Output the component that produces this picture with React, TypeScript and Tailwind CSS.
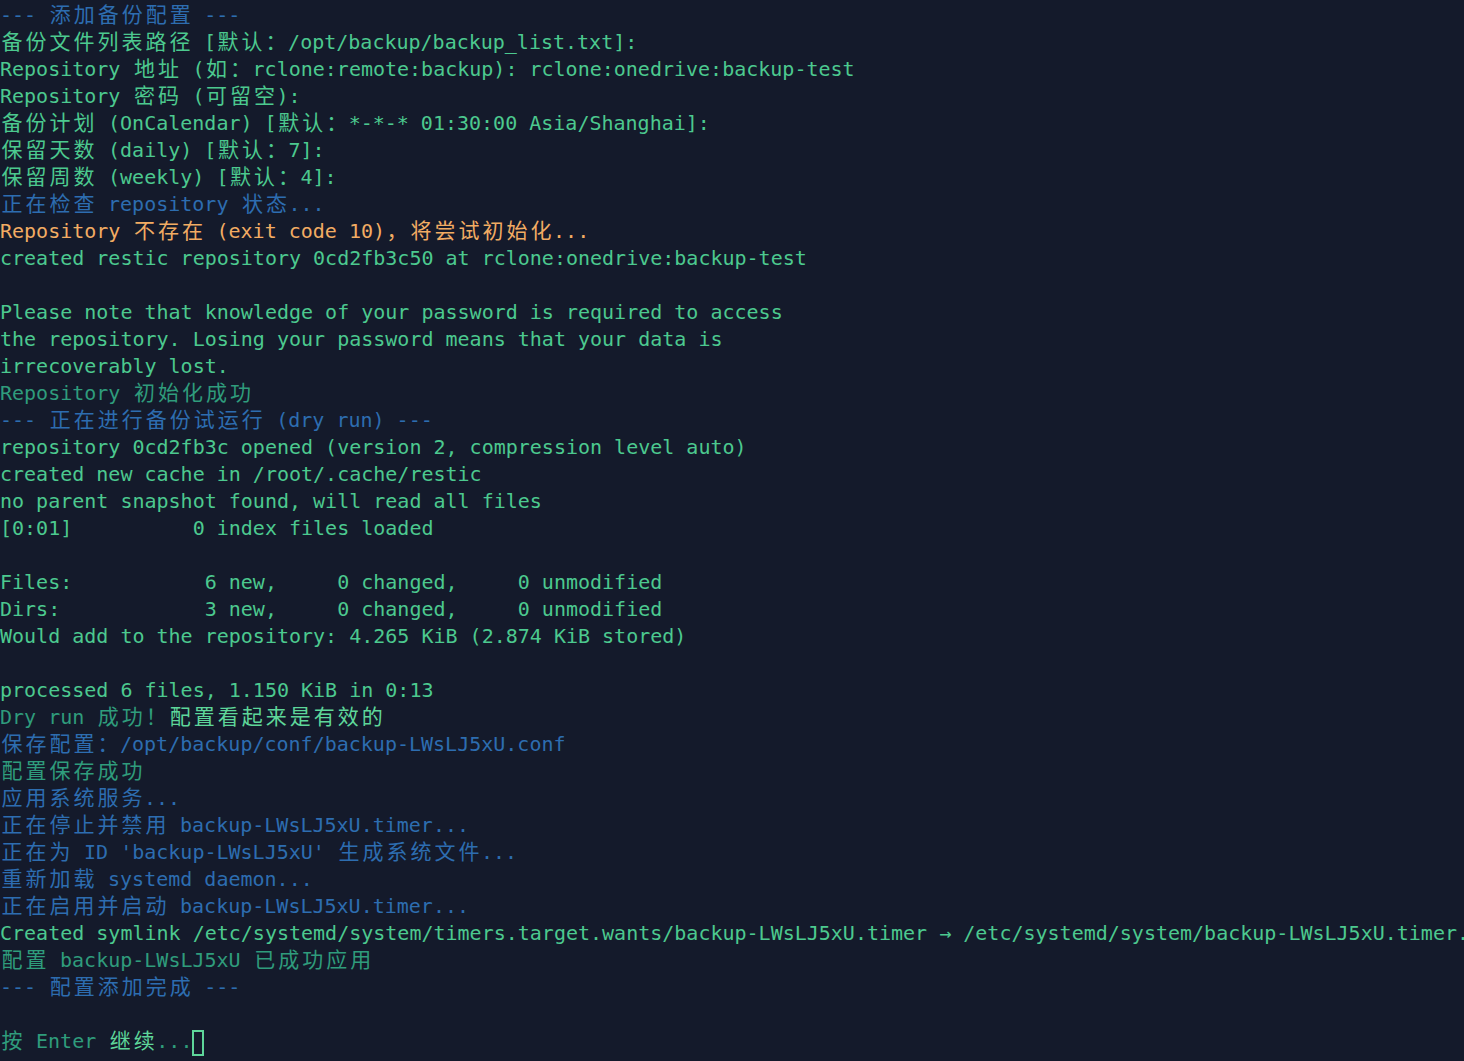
import type { ReactNode } from "react";

type Seg = [string, string];

const G = "text-[#4cc98f]";
const D = "text-[#2f9c7c]";
const B = "text-[#2d6db0]";
const O = "text-[#f2ac63]";
const E = "text-[#5ed69a]";

const lines: Seg[][] = [
  [[B, "--- 添加备份配置 ---"]],
  [[G, "备份文件列表路径 [默认：/opt/backup/backup_list.txt]:"]],
  [[G, "Repository 地址 (如：rclone:remote:backup): rclone:onedrive:backup-test"]],
  [[G, "Repository 密码 (可留空):"]],
  [[G, "备份计划 (OnCalendar) [默认：*-*-* 01:30:00 Asia/Shanghai]:"]],
  [[G, "保留天数 (daily) [默认：7]:"]],
  [[G, "保留周数 (weekly) [默认：4]:"]],
  [[B, "正在检查 repository 状态..."]],
  [[O, "Repository 不存在 (exit code 10)，将尝试初始化..."]],
  [[G, "created restic repository 0cd2fb3c50 at rclone:onedrive:backup-test"]],
  [],
  [[G, "Please note that knowledge of your password is required to access"]],
  [[G, "the repository. Losing your password means that your data is"]],
  [[G, "irrecoverably lost."]],
  [[D, "Repository 初始化成功"]],
  [[B, "--- 正在进行备份试运行 (dry run) ---"]],
  [[G, "repository 0cd2fb3c opened (version 2, compression level auto)"]],
  [[G, "created new cache in /root/.cache/restic"]],
  [[G, "no parent snapshot found, will read all files"]],
  [[G, "[0:01]          0 index files loaded"]],
  [],
  [[G, "Files:           6 new,     0 changed,     0 unmodified"]],
  [[G, "Dirs:            3 new,     0 changed,     0 unmodified"]],
  [[G, "Would add to the repository: 4.265 KiB (2.874 KiB stored)"]],
  [],
  [[G, "processed 6 files, 1.150 KiB in 0:13"]],
  [[D, "Dry run 成功！"], [E, "配置看起来是有效的"]],
  [[B, "保存配置：/opt/backup/conf/backup-LWsLJ5xU.conf"]],
  [[D, "配置保存成功"]],
  [[B, "应用系统服务..."]],
  [[B, "正在停止并禁用 backup-LWsLJ5xU.timer..."]],
  [[B, "正在为 ID 'backup-LWsLJ5xU' 生成系统文件..."]],
  [[B, "重新加载 systemd daemon..."]],
  [[B, "正在启用并启动 backup-LWsLJ5xU.timer..."]],
  [[G, "Created symlink /etc/systemd/system/timers.target.wants/backup-LWsLJ5xU.timer → /etc/systemd/system/backup-LWsLJ5xU.timer."]],
  [[D, "配置 backup-LWsLJ5xU 已成功应用"]],
  [[B, "--- 配置添加完成 ---"]],
  [],
  [[D, "按 Enter "], [E, "继续"], [D, "..."]],
];

function isWide(ch: string) {
  const c = ch.codePointAt(0) ?? 0;
  return (c >= 0x2e80 && c <= 0x9fff) || (c >= 0xff00 && c <= 0xff60);
}

// terminal cells: CJK takes two columns
function Cells({ text }: { text: string }) {
  const out: ReactNode[] = [];
  let buf = "";
  let k = 0;
  for (const ch of text) {
    if (isWide(ch)) {
      if (buf) {
        out.push(<span key={k++}>{buf}</span>);
        buf = "";
      }
      out.push(
        <span key={k++} className="inline-block w-[24px] text-center text-[21px]">
          {ch}
        </span>
      );
    } else {
      buf += ch;
    }
  }
  if (buf) out.push(<span key={k++}>{buf}</span>);
  return <>{out}</>;
}

export default function App() {
  return (
    <div className="w-[1464px] h-[1061px] overflow-hidden bg-[#141a2b] pt-[2px] font-['DejaVu_Sans_Mono','Noto_Sans_CJK_SC',monospace] text-[20px] leading-[27px]">
      {lines.map((segs, i) => (
        <div key={i} className="h-[27px] whitespace-pre">
          {segs.map(([cls, text], j) => (
            <span key={j} className={cls}>
              <Cells text={text} />
            </span>
          ))}
          {i === lines.length - 1 && (
            <span className="inline-block w-[12px] h-[26px] align-middle border-2 border-[#5ed69a]" />
          )}
        </div>
      ))}
    </div>
  );
}
